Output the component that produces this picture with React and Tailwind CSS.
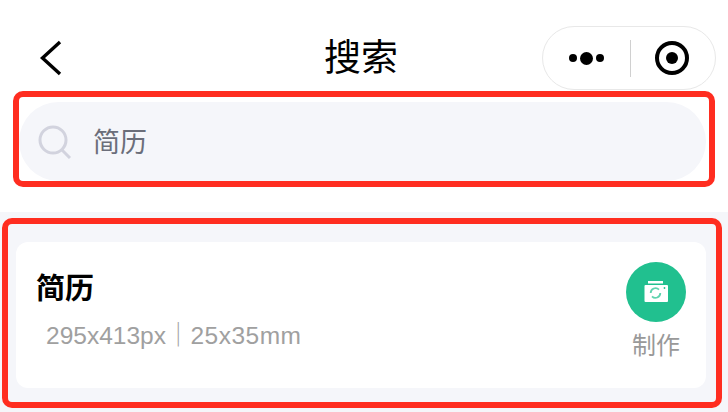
import React from 'react';

const cjk = "font-['Liberation_Sans','Noto_Sans_CJK_SC',sans-serif]";

function CameraIcon() {
  return (
    <svg width="28" height="28" viewBox="0 0 28 28" className="shrink-0">
      <rect x="6" y="3" width="15" height="2.5" fill="#ffffff" />
      <rect x="2.5" y="7" width="23.5" height="17" rx="1" fill="#ffffff" />
      <circle cx="22.5" cy="10" r="0.9" fill="#21c08f" />
      <path d="M8.7 15a4.8 4.8 0 0 1 8.3-3.3" fill="none" stroke="#5fd3ae" strokeWidth="1.8" />
      <path d="M18.3 15a4.8 4.8 0 0 1-8.3 3.3" fill="none" stroke="#5fd3ae" strokeWidth="1.8" />
    </svg>
  );
}

function App() {
  return (
    <div className={`relative w-[728px] h-[412px] overflow-hidden bg-white ${cjk}`}>
      {/* Nav bar */}
      <header className="relative flex items-center justify-between h-[102px] pl-[38px] pr-[12px]">
        <svg width="24" height="38" viewBox="0 0 24 38" className="mt-[14px]">
          <path d="M22 3 L4.5 19 L22 35" fill="none" stroke="#000000" strokeWidth="3.4" />
        </svg>
        <h1 className="absolute left-0 right-[6px] top-[37px] text-center text-[37px] leading-[44px] text-black">搜索</h1>
        <div className="flex items-center w-[174px] h-[64px] mt-[14px] border border-[#e8e8e8] rounded-full">
          <div className="flex items-center justify-center gap-[3px] w-[87px]">
            <span className="w-[8px] h-[8px] rounded-full bg-black"></span>
            <span className="w-[13px] h-[13px] rounded-full bg-black"></span>
            <span className="w-[8px] h-[8px] rounded-full bg-black"></span>
          </div>
          <span className="w-px h-[37px] bg-[#d0d0d0]"></span>
          <div className="flex items-center justify-center flex-1 pr-[2px]">
            <span className="flex items-center justify-center w-[34px] h-[34px] rounded-full border-[4px] border-black">
              <span className="w-[12px] h-[12px] rounded-full bg-black"></span>
            </span>
          </div>
        </div>
      </header>

      {/* Search input */}
      <div className="pl-[19px] pr-[22px]">
        <div className="flex items-center h-[79px] pl-[19px] rounded-full bg-[#f5f6fa]">
          <svg width="34" height="34" viewBox="0 0 34 34">
            <circle cx="15" cy="15" r="13" fill="none" stroke="#d2d3de" strokeWidth="3" />
            <path d="M24 25 L32 33" fill="none" stroke="#d2d3de" strokeWidth="3" />
          </svg>
          <span className="ml-[21px] pt-[4px] text-[27px] leading-none text-[#6b6e7a]">简历</span>
        </div>
      </div>

      {/* Result list */}
      <section className="mt-[31px] h-[200px] pl-[16px] pr-[22px] pt-[30px] bg-[#f5f6fa]">
        <div className="flex justify-between h-[146px] pl-[20px] pr-[20px] rounded-[12px] bg-white">
          <div className="pt-[29px]">
            <div className="text-[29px] leading-[36px] font-bold text-black">简历</div>
            <div className="flex items-center mt-[14px] ml-[10px] text-[24.5px] leading-[30px] text-[#a0a0a0]">
              <span>295x413px</span>
              <span className="text-[#a3a3a3]">｜</span>
              <span className="tracking-[0.5px]">25x35mm</span>
            </div>
          </div>
          <div className="flex flex-col items-center pt-[20px]">
            <div className="flex items-center justify-center w-[60px] h-[60px] rounded-full bg-[#21c08f]">
              <CameraIcon />
            </div>
            <span className="mt-[9px] text-[24px] leading-[30px] text-[#999999]">制作</span>
          </div>
        </div>
      </section>

      {/* Red annotation boxes */}
      <div className="absolute left-[13px] top-[91px] w-[702px] h-[96px] border-[6px] border-[#ff2d20] rounded-[10px]"></div>
      <div className="absolute left-[2px] top-[218px] w-[720px] h-[190px] border-[6px] border-[#ff2d20] rounded-[10px]"></div>
    </div>
  );
}

export default App;
